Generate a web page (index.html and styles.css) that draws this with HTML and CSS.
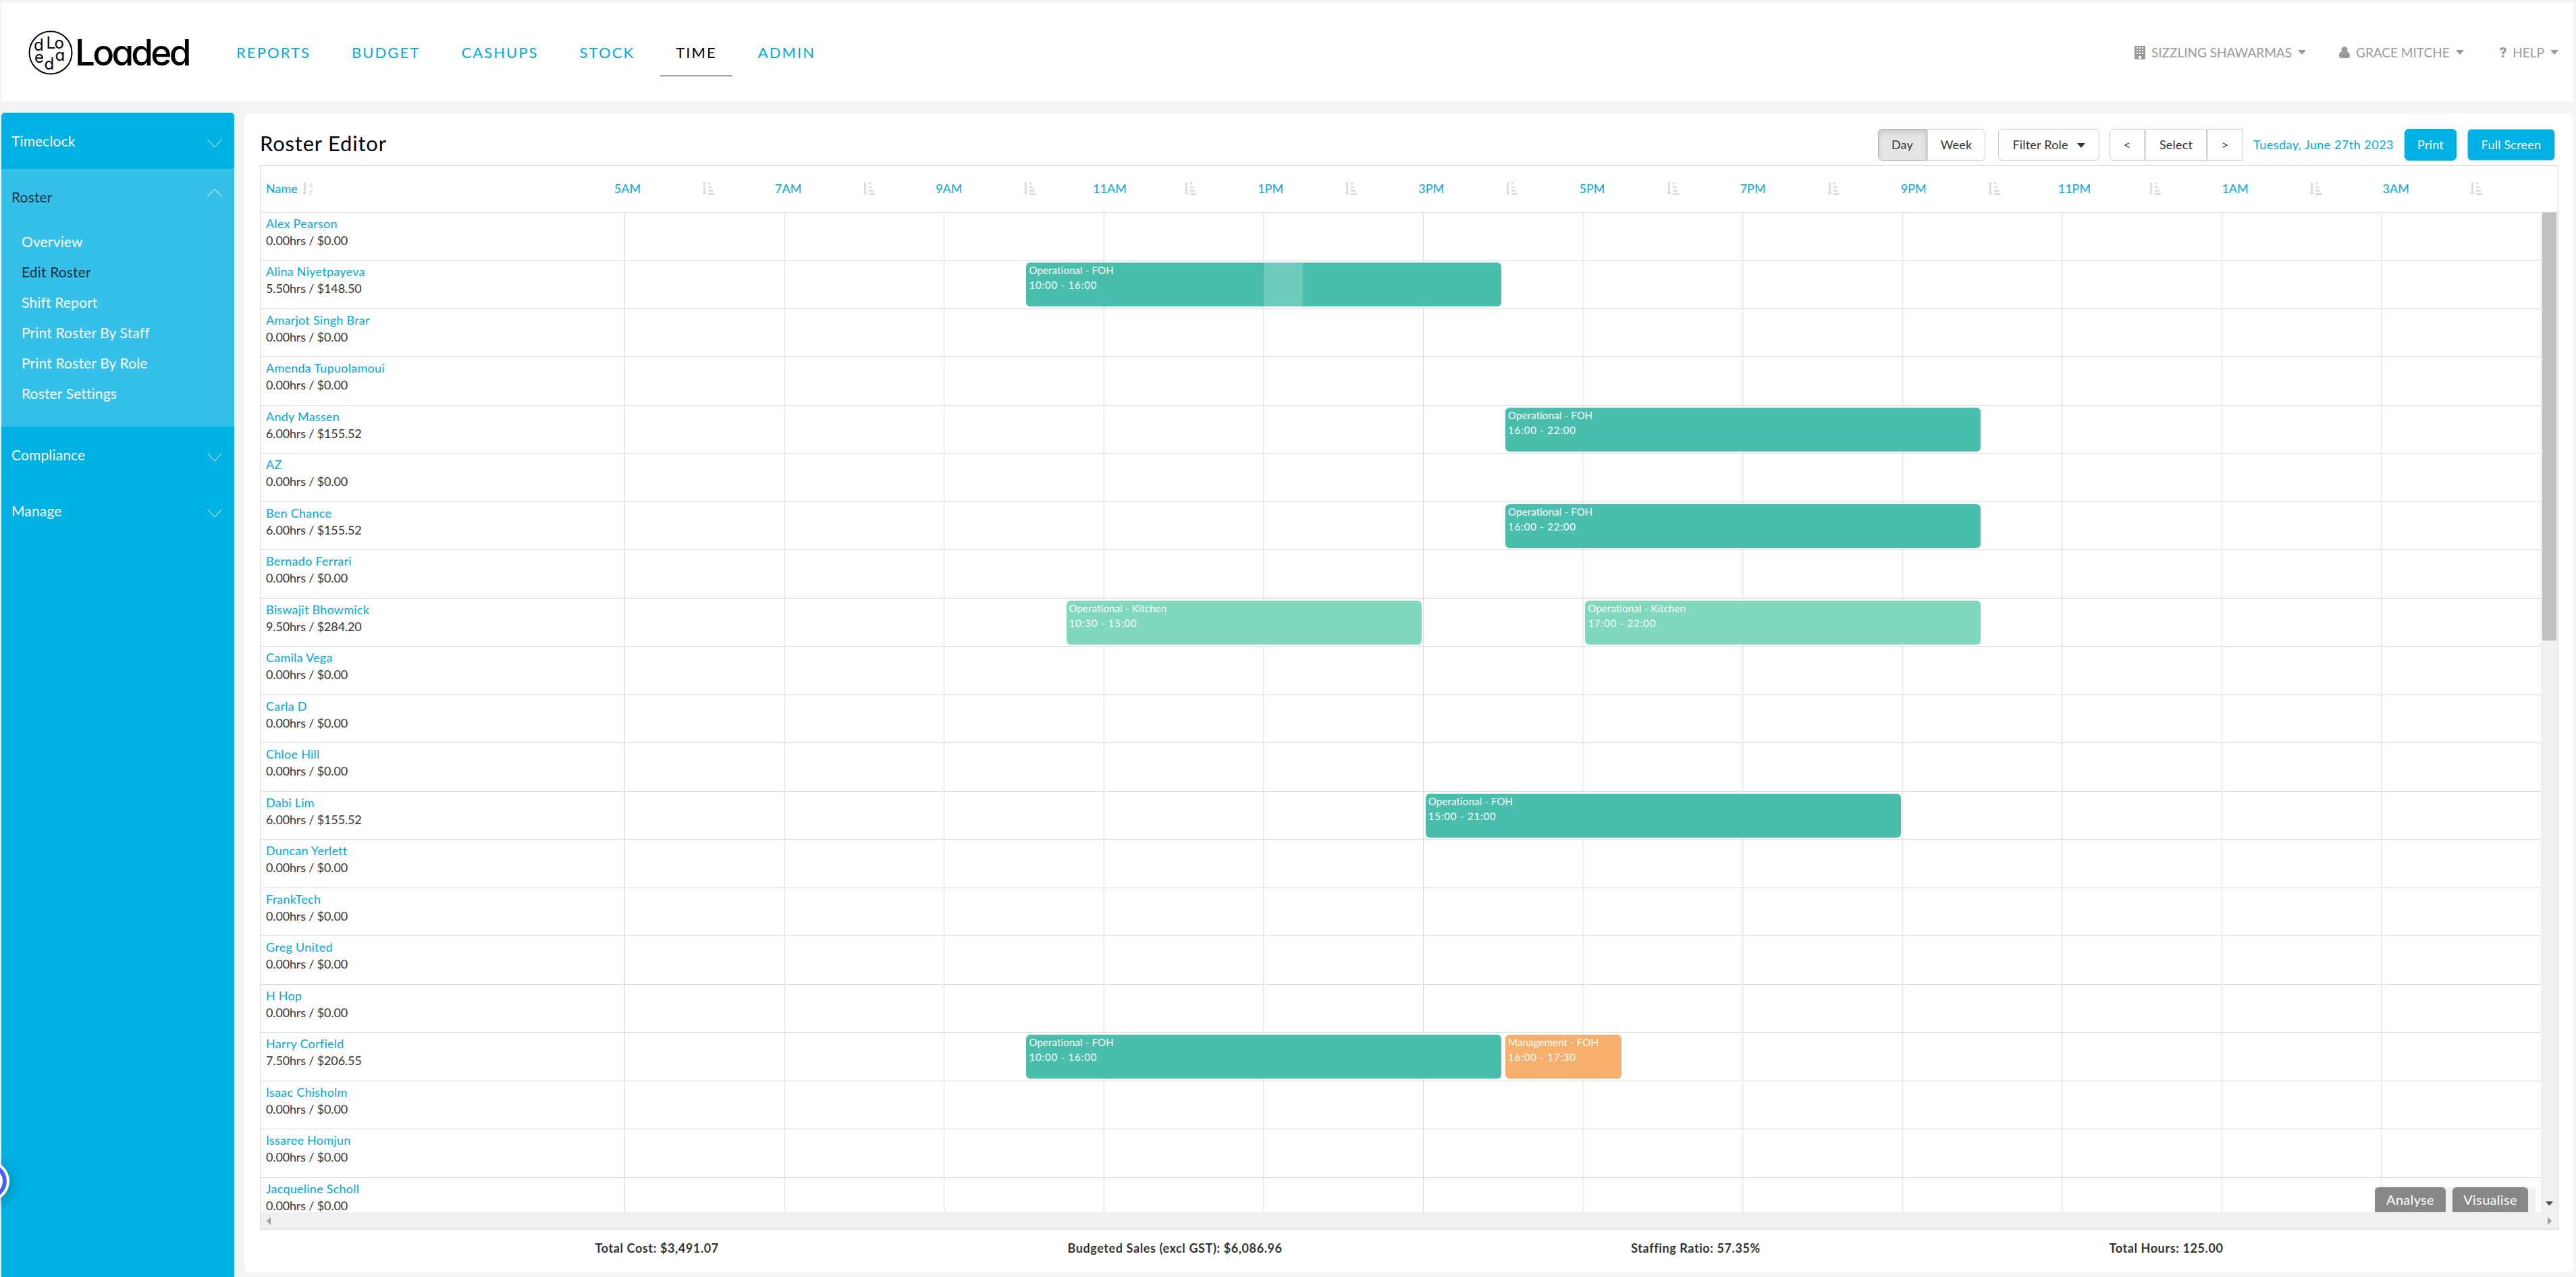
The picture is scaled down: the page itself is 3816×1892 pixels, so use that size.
FILE: index.html
```html
<!DOCTYPE html>
<html lang="en">
<head>
  <meta charset="UTF-8" />
  <title>Roster Editor - Loaded</title>
  <link rel="stylesheet" href="styles.css">
</head>
<body>

  <header class="topbar">
    <a class="logo">
      <svg class="logo-mark" viewBox="0 0 66 66">
        <circle cx="33" cy="33" r="31.5" fill="none" stroke="#000" stroke-width="2"/>
        <text x="8" y="30">d</text>
        <text x="26.500" y="26.500">L</text>
        <text x="38.500" y="27">o</text>
        <text x="39.500" y="44.500">a</text>
        <text x="23.500" y="58">d</text>
        <text x="9" y="47.500">e</text>
      </svg>
      <span class="logo-text">Loaded</span>
    </a>
    <nav class="main-nav">
      <a>REPORTS</a>
      <a>BUDGET</a>
      <a>CASHUPS</a>
      <a>STOCK</a>
      <a class="active">TIME</a>
      <a>ADMIN</a>
    </nav>
    <div class="user-nav">
      <a>
        <svg width="16" height="20" viewBox="0 0 16 20"><path fill="#999" fill-rule="evenodd" d="M0 0h16v20H0zM3 2v2h2V2zM7 2v2h2V2zM11 2v2h2V2zM3 6v2h2V6zM7 6v2h2V6zM11 6v2h2V6zM3 10v2h2v-2zM7 10v2h2v-2zM11 10v2h2v-2zM6 15v4h4v-4z"/></svg>
        <span>SIZZLING SHAWARMAS</span><i class="caret"></i>
      </a>
      <a>
        <svg width="16" height="17" viewBox="0 0 17 18"><path fill="#999" d="M8.500 0a4.600 4.600 0 0 1 3.400 7.800C15.500 8.200 17 11 17 14.500 17 17 15.500 18 14 18H3c-1.500 0-3-1-3-3.500C0 11 1.500 8.200 5.100 7.800A4.600 4.600 0 0 1 8.500 0z"/></svg>
        <span>GRACE MITCHE</span><i class="caret"></i>
      </a>
      <a class="help">
        <b>?</b>
        <span>HELP</span><i class="caret"></i>
      </a>
    </div>
  </header>

  <div class="page">
    <aside class="sidebar">
      <div class="menu-item">Timeclock <svg class="chevron" viewBox="0 0 22 13"><path d="M.5.500 11 12 21.500.5"/></svg></div>
      <div class="menu-group">
        <div class="menu-item open">Roster <svg class="chevron" viewBox="0 0 22 13"><path d="M.5 12.500 11 1l10.500 11.500"/></svg></div>
        <ul>
          <li>Overview</li>
          <li class="active">Edit Roster</li>
          <li>Shift Report</li>
          <li>Print Roster By Staff</li>
          <li>Print Roster By Role</li>
          <li>Roster Settings</li>
        </ul>
      </div>
      <div class="menu-item">Compliance <svg class="chevron" viewBox="0 0 22 13"><path d="M.5.500 11 12 21.500.5"/></svg></div>
      <div class="menu-item">Manage <svg class="chevron" viewBox="0 0 22 13"><path d="M.5.500 11 12 21.500.5"/></svg></div>
    </aside>

    <main class="panel">
      <div class="toolbar">
        <h1>Roster Editor</h1>
        <div class="btn-group view">
          <button class="btn day pressed">Day</button>
          <button class="btn week">Week</button>
        </div>
        <button class="btn filter">Filter Role <i class="caret"></i></button>
        <div class="btn-group pager">
          <button class="btn arrow">&lt;</button>
          <button class="btn select">Select</button>
          <button class="btn arrow">&gt;</button>
        </div>
        <span class="date">Tuesday, June 27th 2023</span>
        <button class="btn primary print">Print</button>
        <button class="btn primary full">Full Screen</button>
      </div>

      <div class="roster">
        <div class="roster-head">
          <div class="name-head">Name
            <svg width="18" height="20" viewBox="0 0 18 20"><path fill="#ddd" d="M3 0h3v15h2l-3.500 4L1 15h2z"/><text x="9.500" y="8">A</text><text x="9.500" y="19">Z</text></svg>
          </div>
          <div class="hours" id="hours"></div>
        </div>
        <div class="roster-body">
          <div class="rows" id="rows"></div>
          <div class="vscroll"><div class="thumb"></div><i class="down"></i></div>
          <div class="drawer-tabs"><span class="t-analyse">Analyse</span><span class="t-visualise">Visualise</span></div>
        </div>
        <div class="hscroll"><i class="left"></i><i class="right"></i></div>
      </div>

      <div class="totals">
        <b>Total Cost: $3,491.07</b>
        <b>Budgeted Sales (excl GST): $6,086.96</b>
        <b>Staffing Ratio: 57.35%</b>
        <b>Total Hours: 125.00</b>
      </div>
    </main>
  </div>

  <div class="chat-bubble"></div>

  <script src="script.js"></script>
</body>
</html>
```
FILE: styles.css
```css
* {
  margin: 0; padding: 0; box-sizing: border-box;
}
body {
  font-family: Lato, sans-serif;
  font-size: 18px;
  background: #f4f4f4;
  color: #333;
  height: 1892px;
  overflow: hidden;
  padding: 4px 4px 0 2px;
}
span, b, a, h1, li, button { white-space: nowrap; }

/* top bar */
.topbar {
  display: flex;
  align-items: center;
  height: 148px;
  background: #fff;
  border-bottom: 1px solid #eaeaea;
  padding: 0 22px 0 40px;
}
.logo {
  display: flex;
  align-items: center;
  gap: 3px;
  width: 285px;
}
.logo-mark { width: 66px; height: 66px; }
.logo-mark text, .logo-text {
  font-family: Inter, sans-serif;
  font-feature-settings: "cv11";
}
.logo-mark text { font-size: 24px; letter-spacing: -1px; }
.logo-text {
  font-size: 53px;
  letter-spacing: -3.800px;
  font-weight: 500;
  color: #000;
  line-height: 64px;
}
.main-nav { display: flex; gap: 16px; height: 70px; margin-top: 1px; }
.main-nav a {
  font-size: 22px;
  letter-spacing: 2.080px;
  line-height: 70px;
  padding: 0 22px 0 23px;
  color: #00a9e0;
}
.main-nav .active { color: #000; border-bottom: 1px solid #000; }
.user-nav {
  display: flex;
  gap: 49px;
  margin-left: auto;
  color: #999;
  font-size: 19px;
}
.user-nav a { display: flex; align-items: center; gap: 9px; }
.user-nav .help { margin-left: 4px; }
.user-nav b { font-size: 21px; font-family: Roboto, sans-serif; font-weight: 900; }
.caret {
  display: inline-block;
  border: 6px solid transparent;
  border-top: 7px solid;
  border-bottom: 0;
}

/* sidebar */
.page { display: flex; gap: 15px; margin-top: 15px; }
.sidebar {
  width: 345px;
  height: 1725px;
  background: #00b1e4;
  border-radius: 5px 5px 0 0;
  color: #fff;
  font-size: 21px;
  letter-spacing: 0.150px;
}
.menu-item {
  display: flex;
  justify-content: space-between;
  align-items: center;
  height: 83px;
  padding: 0 18px 1px 15px;
}
.menu-item.open { color: #1d3540; }
.open .chevron { margin-top: -11px; }
.chevron {
  width: 22px; height: 13px;
  margin-top: 9px;
  fill: none;
  stroke: #fff;
}
.menu-group { background: #34c0e9; height: 382px; }
.menu-group ul { list-style: none; padding: 2px 0 0 30px; }
.menu-group li { height: 45px; line-height: 45px; }
.menu-group .active { color: #10303c; }

/* panel */
.panel {
  width: 3450px;
  height: 1717px;
  margin-top: 1px;
  background: #fff;
  border-radius: 8px;
  padding: 0 22px 0 23px;
}
.toolbar { display: flex; align-items: center; height: 77px; padding: 16px 5px 0 0; }
h1 {
  font-size: 31px;
  font-weight: 400;
  letter-spacing: 0.800px;
  color: #000;
  margin: -5px auto 0 0;
}
.btn {
  height: 47px;
  font: 18px Lato, sans-serif;
  letter-spacing: 0.200px;
  padding-bottom: 1px;
  color: #333;
  background: #fff;
  border: 1px solid #ccc;
  border-radius: 6px;
}
.btn-group { display: flex; gap: 1px; }
.btn-group .btn { border-radius: 0; }
.btn-group .btn:first-child { border-radius: 6px 0 0 6px; }
.view .btn:last-child { border-radius: 0 6px 6px 0; }
.btn.pressed {
  background: #e6e6e6;
  border-color: #adadad;
  box-shadow: inset 0 5px 8px rgba(0, 0, 0, 0.125);
}
.day { width: 72px; }
.week { width: 86px; }
.filter { width: 150px; margin: 0 15px 0 19px; }
.filter .caret { margin-left: 8px; vertical-align: 2px; }
.arrow { width: 52px; }
.select { width: 91px; }
.date { width: 208px; margin: 0 16px; padding-bottom: 2px; letter-spacing: 0.480px; color: #00a9e0; }
.btn.primary { background: #00b1e4; border-color: #00b1e4; color: #fff; }
.print { width: 77px; margin-right: 16px; }
.btn.full { width: 130px; border-color: #a8d4e2; }

/* roster table */
.roster { border: 1px solid #d9d9d9; width: 3405px; height: 1577px; }
.roster-head {
  display: flex;
  align-items: center;
  height: 69px;
  padding-bottom: 2px;
  border-bottom: 1px solid #d9d9d9;
  color: #00a9e0;
}
.name-head { display: flex; align-items: center; gap: 6px; width: 484px; padding-left: 8px; }
.name-head svg { margin-top: 2px; }
.name-head text { font: bold 10px "Liberation Serif", serif; fill: #ddd; }
.hours { display: flex; }
.hours > div { display: flex; align-items: center; width: 119.080px; justify-content: center; }
.hours svg { display: block; margin-top: 2px; }
.roster-body { display: flex; position: relative; height: 1481px; overflow: hidden; }
.rows { width: 3378px; }
.row { display: flex; height: 71.500px; border-bottom: 1px solid #dcdcdc; }
.row:first-child { height: 71px; }
.staff { width: 539px; padding: 4px 0 0 8px; line-height: 25px; letter-spacing: -0.150px; white-space: nowrap; }
.staff .name { color: #00a9e0; letter-spacing: 0.250px; }
.timeline {
  display: grid;
  grid-template-columns: repeat(48, 59.150px);
  background: linear-gradient(90deg, #dcdcdc 1px, transparent 1px);
  background-size: 236.600px 100%;
}
.shift {
  position: relative;
  grid-row: 1;
  height: 65px;
  margin: 3px 2px 0 4px;
  padding-left: 4px;
  border-radius: 6px;
  color: #fff;
  font-size: 15px;
  line-height: 22px;
  letter-spacing: 0.150px;
  white-space: nowrap;
}
.shift .time { display: block; letter-spacing: 0.800px; }
.foh { background: #4abeac; }
.kitchen { background: #80d8be; }
.management { background: #f6af6d; }
.break {
  position: absolute;
  top: 0;
  width: 58px; height: 100%;
  background: rgba(255, 255, 255, 0.2);
}
.vscroll { width: 25px; background: #f0f0f0; padding: 0 2px; }
.thumb { height: 634px; background: #c1c1c1; }
.vscroll .down {
  display: block;
  margin: 831px 0 0 5px;
  width: 11px;
  border: 5.500px solid transparent;
  border-top: 6px solid #505050;
  border-bottom: 0;
}
.drawer-tabs {
  position: absolute;
  right: 33px; bottom: 0;
  display: flex;
  gap: 10px;
  height: 37px;
  padding-right: 11px;
  background: #f0f0f0;
}
.drawer-tabs span {
  background: #888;
  color: #fff;
  font-size: 20px;
  letter-spacing: 0.300px;
  line-height: 37px;
  text-align: center;
  border-radius: 6px 6px 0 0;
}
.t-analyse { width: 105px; }
.t-visualise { width: 112px; }
.hscroll {
  display: flex;
  justify-content: space-between;
  align-items: center;
  height: 25px;
  padding: 0 9px;
  background: #f0f0f0;
}
.hscroll i { border: 6px solid transparent; }
.hscroll .left { border-left: 0; border-right-color: #a0a0a0; }
.hscroll .right { border-right: 0; border-left-color: #a0a0a0; }

/* totals */
.totals {
  display: flex;
  justify-content: space-evenly;
  margin: 0 -20px;
  padding-top: 13px;
  line-height: 28px;
  letter-spacing: 0.600px;
}

.chat-bubble {
  position: absolute;
  left: -46px; top: 1720px;
  width: 60px; height: 60px;
  border: 4px solid #fff;
  border-radius: 50%;
  background: #fff;
  box-shadow: inset 0 0 0 6px #4a5cff, 0 4px 20px rgba(0, 0, 0, 0.3);
}
```
FILE: script.js
```js
const hourLabels = ["5AM", "7AM", "9AM", "11AM", "1PM", "3PM", "5PM", "7PM", "9PM", "11PM", "1AM", "3AM"];

const staff = [
  ["Alex Pearson", "0.00hrs / $0.00"],
  ["Alina Niyetpayeva", "5.50hrs / $148.50", [["foh", "Operational - FOH", "10:00", "16:00", "13:00"]]],
  ["Amarjot Singh Brar", "0.00hrs / $0.00"],
  ["Amenda Tupuolamoui", "0.00hrs / $0.00"],
  ["Andy Massen", "6.00hrs / $155.52", [["foh", "Operational - FOH", "16:00", "22:00"]]],
  ["AZ", "0.00hrs / $0.00"],
  ["Ben Chance", "6.00hrs / $155.52", [["foh", "Operational - FOH", "16:00", "22:00"]]],
  ["Bernado Ferrari", "0.00hrs / $0.00"],
  ["Biswajit Bhowmick", "9.50hrs / $284.20", [["kitchen", "Operational - Kitchen", "10:30", "15:00"], ["kitchen", "Operational - Kitchen", "17:00", "22:00"]]],
  ["Camila Vega", "0.00hrs / $0.00"],
  ["Carla D", "0.00hrs / $0.00"],
  ["Chloe Hill", "0.00hrs / $0.00"],
  ["Dabi Lim", "6.00hrs / $155.52", [["foh", "Operational - FOH", "15:00", "21:00"]]],
  ["Duncan Yerlett", "0.00hrs / $0.00"],
  ["FrankTech", "0.00hrs / $0.00"],
  ["Greg United", "0.00hrs / $0.00"],
  ["H Hop", "0.00hrs / $0.00"],
  ["Harry Corfield", "7.50hrs / $206.55", [["foh", "Operational - FOH", "10:00", "16:00"], ["management", "Management - FOH", "16:00", "17:30"]]],
  ["Isaac Chisholm", "0.00hrs / $0.00"],
  ["Issaree Homjun", "0.00hrs / $0.00"],
  ["Jacqueline Scholl", "0.00hrs / $0.00"]
];

const sortIcon = `<svg width="18" height="20" viewBox="0 0 18 20"><path fill="#ddd" d="M2 0h3v15h2l-3.500 4L0 15h2zM9 0h3v3H9zM9 6h5v2.500H9zM9 11h7v3H9zM9 16h9v3H9z"/></svg>`;

// half hour grid line, the day starts at 5AM
function slot(time) {
  const [h, m] = time.split(":").map(Number);
  return (h - 5) * 2 + m / 30 + 1;
}

function shiftHtml([type, role, start, end, rest]) {
  const left = rest ? (slot(rest) - slot(start)) * 59.15 - 3 : 0;
  const pause = rest ? `<i class="break" style="left:${left}px"></i>` : "";
  return `<div class="shift ${type}" style="grid-column:${slot(start)} / ${slot(end)}">${role}<span class="time">${start} - ${end}</span>${pause}</div>`;
}

document.getElementById("hours").innerHTML = hourLabels
  .map(label => `<div>${label}</div><div>${sortIcon}</div>`)
  .join("");

document.getElementById("rows").innerHTML = staff
  .map(([name, cost, shifts = []]) => `
    <div class="row">
      <div class="staff"><div class="name">${name}</div><div>${cost}</div></div>
      <div class="timeline">${shifts.map(shiftHtml).join("")}</div>
    </div>`)
  .join("");
```
